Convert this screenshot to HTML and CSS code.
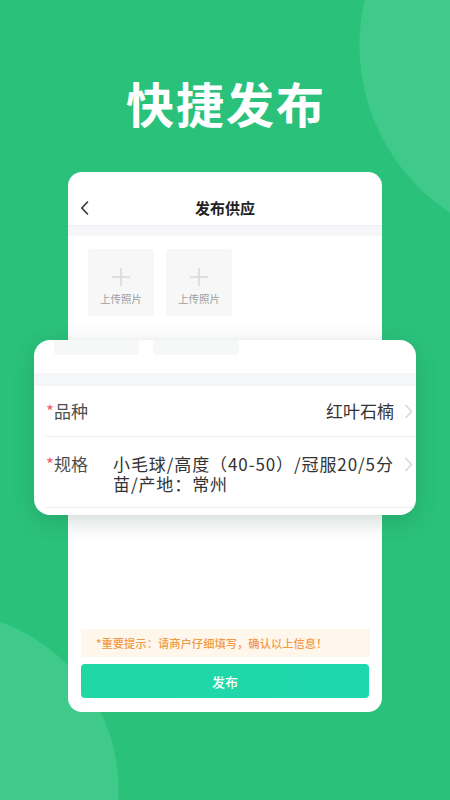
FILE: index.html
```html
<!DOCTYPE html>
<html lang="zh">
<head>
<meta charset="utf-8">
<title>快捷发布</title>
<link rel="stylesheet" href="styles.css">
</head>
<body>
<div class="screen">
  <h1 class="headline">快捷发布</h1>
  <div class="phone">
    <div class="nav">
      <svg class="back" width="9" height="14" viewBox="0 0 9 14"><path d="M7.5 1 L1.8 7 L7.5 13" fill="none" stroke="#333" stroke-width="1.6" stroke-linecap="round" stroke-linejoin="round"/></svg>
      <span class="nav-title">发布供应</span>
      <span></span>
    </div>
    <div class="band"></div>
    <div class="photos">
      <div class="photo">
        <svg class="plus" width="20" height="20" viewBox="0 0 20 20"><path d="M10 1 V19 M1 10 H19" stroke="#d9d9d9" stroke-width="1.6"/></svg>
        <span class="photo-label">上传照片</span>
      </div>
      <div class="photo">
        <svg class="plus" width="20" height="20" viewBox="0 0 20 20"><path d="M10 1 V19 M1 10 H19" stroke="#d9d9d9" stroke-width="1.6"/></svg>
        <span class="photo-label">上传照片</span>
      </div>
    </div>

    <div class="zoom-card">
      <div class="zc-photos">
        <div class="zc-box zc-box-a"></div>
        <div class="zc-box zc-box-b"></div>
      </div>
      <div class="zc-band"></div>
      <div class="row">
        <span class="label"><span class="star">*</span>品种</span>
        <span class="value value-right">红叶石楠</span>
        <svg class="chev" width="9" height="15" viewBox="0 0 9 15"><path d="M1.5 1 L7.5 7.5 L1.5 14" fill="none" stroke="#d6d6d6" stroke-width="1.4" stroke-linejoin="round"/></svg>
      </div>
      <div class="row row-multi">
        <span class="label"><span class="star">*</span>规格</span>
        <span class="value value-multi"><span class="line">小毛球/高度（40-50）/冠服20/5分</span><span class="line">苗/产地：常州</span></span>
        <svg class="chev" width="9" height="15" viewBox="0 0 9 15"><path d="M1.5 1 L7.5 7.5 L1.5 14" fill="none" stroke="#d6d6d6" stroke-width="1.4" stroke-linejoin="round"/></svg>
      </div>
    </div>

    <div class="spacer"></div>
    <div class="tip">*重要提示：请商户仔细填写，确认以上信息！</div>
    <button class="publish">发布</button>
  </div>
</div>
</body>
</html>
```

FILE: styles.css
```css
* { box-sizing: border-box; }

html, body {
  margin: 0;
  padding: 0;
}

body {
  width: 450px;
  height: 800px;
  overflow: hidden;
  font-family: "Noto Sans CJK SC", "Noto Sans", sans-serif;
  background:
    radial-gradient(circle at 560px 45px, #43ca8e 0, #3fc98a 200px, rgba(64, 201, 139, 0) 201px),
    radial-gradient(circle at -60px 790px, #43ca8e 0, #3fc98a 178px, rgba(64, 201, 139, 0) 179px),
    #2ac17b;
}

.screen {
  display: flex;
  flex-direction: column;
  align-items: flex-start;
  padding-top: 73px;
}

.headline {
  margin: 0;
  width: 100%;
  text-align: center;
  color: #ffffff;
  font-size: 48px;
  line-height: 58px;
  font-weight: 700;
  letter-spacing: 2px;
  padding-left: 2px;
}

.phone {
  position: relative;
  margin-top: 41px;
  margin-left: 68px;
  width: 314px;
  height: 540px;
  background: #ffffff;
  border-radius: 14px;
  display: flex;
  flex-direction: column;
}

.nav {
  height: 54px;
  display: grid;
  grid-template-columns: 1fr auto 1fr;
  align-items: end;
  padding: 0 12px 7px 12px;
  border-bottom: 1px solid #efeff1;
}

.back {
  display: block;
  margin-bottom: 3px;
}

.nav-title {
  font-size: 15px;
  line-height: 20px;
  font-weight: 700;
  color: #222;
}

.band {
  height: 10px;
  background: #f5f6f8;
}

.photos {
  display: flex;
  gap: 12px;
  padding: 13px 20px 0 20px;
}

.photo {
  width: 66px;
  height: 67px;
  background: #f7f7f7;
  border-radius: 3px;
  display: flex;
  flex-direction: column;
  align-items: center;
  padding-top: 18px;
}

.plus { display: block; }

.photo-label {
  margin-top: 4px;
  font-size: 10.5px;
  line-height: 15px;
  color: #9e9e9e;
}

.zoom-card {
  position: absolute;
  top: 168px;
  left: -34px;
  width: 382px;
  height: 175px;
  background: #ffffff;
  border-radius: 16px;
  box-shadow: 0 6px 22px rgba(30, 70, 50, 0.2);
  overflow: hidden;
}

.zc-photos {
  display: flex;
  gap: 14px;
  padding: 0 20px;
  height: 15px;
}

.zc-box {
  height: 15px;
  background: #f6f7f7;
  border-radius: 0 0 4px 4px;
}

.zc-box-a { width: 85px; }
.zc-box-b { width: 86px; }

.zc-band {
  margin-top: 18px;
  height: 13px;
  background: #f5f6f8;
}

.row {
  margin-left: 11px;
  padding-left: 1px;
  padding-right: 3px;
  height: 51px;
  display: flex;
  align-items: center;
  border-bottom: 1px solid #eeeeee;
}

.row-multi {
  height: 71px;
  align-items: flex-start;
  padding-top: 17px;
}

.label {
  width: 67px;
  flex: none;
  font-size: 17px;
  line-height: 20px;
  color: #4e4e4e;
}

.star {
  color: #f35a6c;
}

.value {
  flex: 1;
  font-size: 17px;
  line-height: 20px;
  color: #333333;
}

.value-right { text-align: right; }

.value-multi {
  display: flex;
  flex-direction: column;
  letter-spacing: 0.9px;
}

.line {
  display: block;
  height: 20px;
  white-space: nowrap;
}

.chev {
  flex: none;
  display: block;
  margin-left: 10px;
}

.row-multi .chev { margin-top: 3px; }

.spacer { flex: 1; }

.tip {
  margin: 0 12px 0 13px;
  height: 28px;
  background: #fff7ec;
  color: #f09a48;
  font-size: 11.3px;
  font-weight: 500;
  line-height: 28px;
  padding-left: 15px;
  white-space: nowrap;
}

.publish {
  margin: 7px 13px 14px 13px;
  height: 34px;
  border: none;
  border-radius: 4px;
  background: linear-gradient(90deg, #20d8a4, #1ed7ad);
  color: #ffffff;
  font-family: "Noto Sans CJK SC", sans-serif;
  font-size: 13px;
  font-weight: 500;
}
```
